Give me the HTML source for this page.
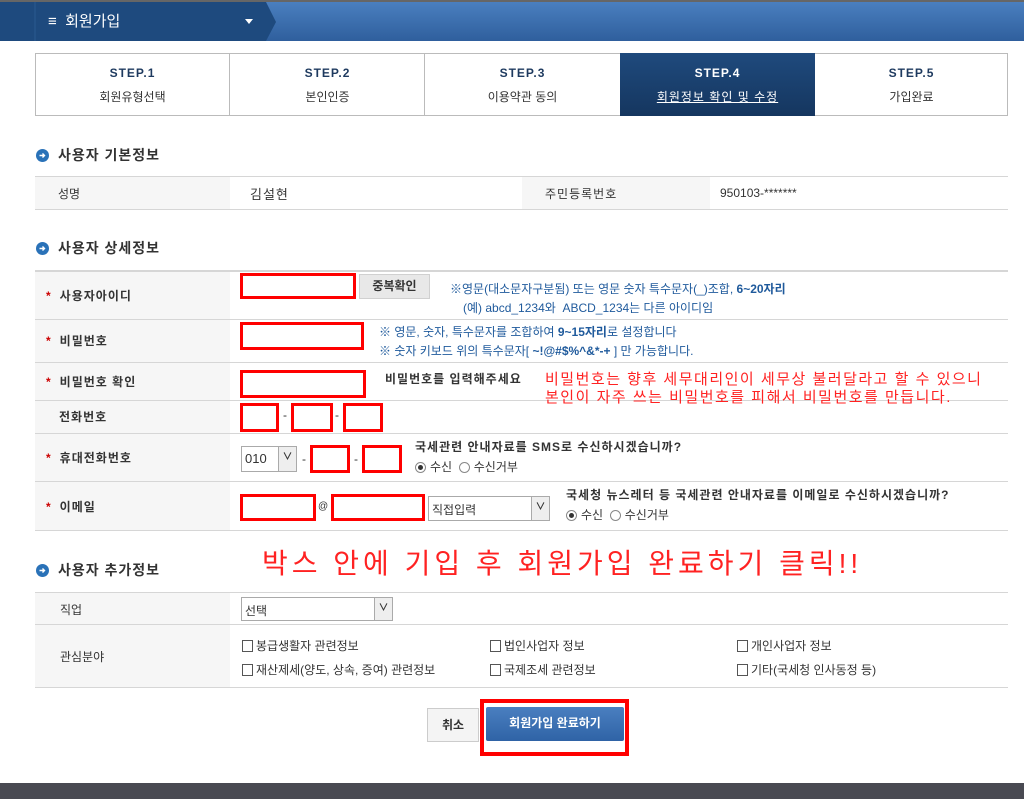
<!DOCTYPE html>
<html><head><meta charset="utf-8"><style>
*{margin:0;padding:0;box-sizing:border-box}
body{width:1024px;height:799px;position:relative;background:#fff;font-family:"Liberation Sans","Noto Sans CJK KR",sans-serif;font-size:12px;color:#333;overflow:hidden}
.a{position:absolute;white-space:nowrap}
.rb{position:absolute;border:3px solid #f00;background:#fff}
.bl{color:#1f5a9c}
.lab{position:absolute;left:35px;width:195px;background:#f6f6f6}
.hl{position:absolute;left:35px;right:16px;height:1px;background:#d6d6d6}
.h{position:absolute;left:36px;font-size:14px;font-weight:bold;color:#333;letter-spacing:1px}
.h svg{vertical-align:-2px;margin-right:9px}
.st{color:#c00;font-weight:bold;margin-right:8px}
.cb{display:inline-block;width:11px;height:12px;border:1px solid #555;vertical-align:-2px;margin-right:3px}
.rd{display:inline-block;width:11px;height:11px;border:1px solid #888;border-radius:50%;vertical-align:-2px;margin-right:4px;position:relative}
.rd.on:after{content:"";position:absolute;left:2px;top:2px;width:5px;height:5px;border-radius:50%;background:#333}
.sel{position:absolute;border:1px solid #aaa;background:#fff;font-size:12px;padding:4px 3px}
.sel b{position:absolute;right:0;top:0;bottom:0;width:18px;border-left:1px solid #aaa;background:#eee;font-size:10px;text-align:center;line-height:22px}
</style></head><body>
<div class="a" style="left:0;top:0;width:1024px;height:41px;background:linear-gradient(#4a7fbf,#2f5f9d);border-top:2px solid #666"></div>
<svg class="a" style="left:0;top:2px" width="280" height="39"><polygon points="0,0 266,0 276,20 266,39 0,39" fill="#1e4a7e"/><line x1="35" y1="0" x2="35" y2="39" stroke="#2b5a90"/><polygon points="245,17 253,17 249,22" fill="#fff"/></svg>
<div class="a" style="left:48px;top:10px;color:#fff;font-size:15px">≡&nbsp; 회원가입</div>
<div class="a" style="left:35px;top:53px;width:973px;height:63px;border:1px solid #bbb"></div>
<div class="a" style="left:229px;top:53px;width:1px;height:63px;background:#bbb"></div>
<div class="a" style="left:424px;top:53px;width:1px;height:63px;background:#bbb"></div>
<div class="a" style="left:620px;top:53px;width:195px;height:63px;background:linear-gradient(#1f4a7d,#15365f)"></div>
<div class="a" style="left:35px;top:66px;width:195px;text-align:center;font-weight:bold;color:#1e3a5f;letter-spacing:1px">STEP.1</div>
<div class="a" style="left:35px;top:88px;width:195px;text-align:center">회원유형선택</div>
<div class="a" style="left:230px;top:66px;width:195px;text-align:center;font-weight:bold;color:#1e3a5f;letter-spacing:1px">STEP.2</div>
<div class="a" style="left:230px;top:88px;width:195px;text-align:center">본인인증</div>
<div class="a" style="left:425px;top:66px;width:195px;text-align:center;font-weight:bold;color:#1e3a5f;letter-spacing:1px">STEP.3</div>
<div class="a" style="left:425px;top:88px;width:195px;text-align:center">이용약관 동의</div>
<div class="a" style="left:620px;top:66px;width:195px;text-align:center;font-weight:bold;color:#fff;letter-spacing:1px">STEP.4</div>
<div class="a" style="left:620px;top:88px;width:195px;text-align:center;color:#fff;text-decoration:underline;letter-spacing:1px">회원정보 확인 및 수정</div>
<div class="a" style="left:815px;top:66px;width:193px;text-align:center;font-weight:bold;color:#1e3a5f;letter-spacing:1px">STEP.5</div>
<div class="a" style="left:815px;top:88px;width:193px;text-align:center">가입완료</div>
<div class="h a" style="top:145px"><svg width="13" height="13"><circle cx="6.5" cy="6.5" r="6.5" fill="#2a72b8"/><path d="M3.5 6.5h5M6.5 4.5l2 2-2 2" stroke="#fff" stroke-width="1.4" fill="none"/></svg>사용자 기본정보</div>
<div class="lab" style="top:177px;height:32px"></div>
<div class="a" style="left:522px;top:177px;width:188px;height:32px;background:#f6f6f6"></div>
<div class="hl" style="top:176px"></div><div class="hl" style="top:209px"></div>
<div class="a" style="left:58px;top:185px">성명</div>
<div class="a" style="left:250px;top:184px;font-size:13px;letter-spacing:1px">김설현</div>
<div class="a" style="left:545px;top:185px;letter-spacing:1px">주민등록번호</div>
<div class="a" style="left:720px;top:186px">950103-*******</div>
<div class="h a" style="top:238px"><svg width="13" height="13"><circle cx="6.5" cy="6.5" r="6.5" fill="#2a72b8"/><path d="M3.5 6.5h5M6.5 4.5l2 2-2 2" stroke="#fff" stroke-width="1.4" fill="none"/></svg>사용자 상세정보</div>
<div class="lab" style="top:270px;height:261px"></div>
<div class="hl" style="top:270px;height:2px"></div>
<div class="hl" style="top:319px"></div><div class="hl" style="top:362px"></div><div class="hl" style="top:400px"></div><div class="hl" style="top:433px"></div><div class="hl" style="top:481px"></div><div class="hl" style="top:530px"></div>
<div class="a" style="left:46px;top:287px;font-weight:bold;letter-spacing:1px"><span class="st">*</span>사용자아이디</div>
<div class="a" style="left:46px;top:332px;font-weight:bold;letter-spacing:1px"><span class="st">*</span>비밀번호</div>
<div class="a" style="left:46px;top:373px;font-weight:bold;letter-spacing:1px"><span class="st">*</span>비밀번호 확인</div>
<div class="a" style="left:59px;top:408px;font-weight:bold;letter-spacing:1px">전화번호</div>
<div class="a" style="left:46px;top:449px;font-weight:bold;letter-spacing:1px"><span class="st">*</span>휴대전화번호</div>
<div class="a" style="left:46px;top:498px;font-weight:bold;letter-spacing:1px"><span class="st">*</span>이메일</div>
<div class="rb" style="left:240px;top:273px;width:116px;height:26px"></div>
<div class="a" style="left:359px;top:274px;width:71px;height:25px;background:#e8e8e8;border:1px solid #d0d0d0;text-align:center;line-height:22px;font-weight:bold">중복확인</div>
<div class="a bl" style="left:450px;top:280px">※영문(대소문자구분됨) 또는 영문 숫자 특수문자(_)조합, <b>6~20자리</b></div>
<div class="a bl" style="left:463px;top:299px">(예) abcd_1234와 &nbsp;ABCD_1234는 다른 아이디임</div>
<div class="rb" style="left:240px;top:322px;width:124px;height:28px"></div>
<div class="a bl" style="left:379px;top:323px">※ 영문, 숫자, 특수문자를 조합하여 <b>9~15자리</b>로 설정합니다</div>
<div class="a bl" style="left:379px;top:342px">※ 숫자 키보드 위의 특수문자[ <b>~!@#$%^&amp;*-+</b> ] 만 가능합니다.</div>
<div class="rb" style="left:240px;top:370px;width:126px;height:28px"></div>
<div class="a" style="left:385px;top:370px;font-weight:bold;letter-spacing:1px">비밀번호를 입력해주세요</div>
<div class="a" style="left:545px;top:371px;color:#f22;font-size:15px;line-height:18px;letter-spacing:1.5px">비밀번호는 향후 세무대리인이 세무상 불러달라고 할 수 있으니<br>본인이 자주 쓰는 비밀번호를 피해서 비밀번호를 만듭니다.</div>
<div class="rb" style="left:240px;top:403px;width:39px;height:29px"></div>
<div class="a" style="left:283px;top:408px">-</div>
<div class="rb" style="left:291px;top:403px;width:42px;height:29px"></div>
<div class="a" style="left:335px;top:408px">-</div>
<div class="rb" style="left:343px;top:403px;width:40px;height:29px"></div>
<div class="sel" style="left:241px;top:446px;width:56px;height:26px;font-size:13px">010<b>∨</b></div>
<div class="a" style="left:302px;top:452px">-</div>
<div class="rb" style="left:310px;top:445px;width:40px;height:28px"></div>
<div class="a" style="left:354px;top:452px">-</div>
<div class="rb" style="left:362px;top:445px;width:40px;height:28px"></div>
<div class="a" style="left:415px;top:438px;font-weight:bold;letter-spacing:1px">국세관련 안내자료를 SMS로 수신하시겠습니까?</div>
<div class="a" style="left:415px;top:458px"><span class="rd on"></span>수신 &nbsp;<span class="rd"></span>수신거부</div>
<div class="rb" style="left:240px;top:494px;width:76px;height:27px"></div>
<div class="a" style="left:318px;top:501px;font-size:10px">@</div>
<div class="rb" style="left:331px;top:494px;width:94px;height:27px"></div>
<div class="sel" style="left:428px;top:496px;width:122px;height:25px">직접입력<b>∨</b></div>
<div class="a" style="left:566px;top:486px;font-weight:bold;letter-spacing:1px">국세청 뉴스레터 등 국세관련 안내자료를 이메일로 수신하시겠습니까?</div>
<div class="a" style="left:566px;top:506px"><span class="rd on"></span>수신 &nbsp;<span class="rd"></span>수신거부</div>
<div class="h a" style="top:560px"><svg width="13" height="13"><circle cx="6.5" cy="6.5" r="6.5" fill="#2a72b8"/><path d="M3.5 6.5h5M6.5 4.5l2 2-2 2" stroke="#fff" stroke-width="1.4" fill="none"/></svg>사용자 추가정보</div>
<div class="a" style="left:262px;top:542px;color:#f22;font-size:28px;letter-spacing:4px">박스 안에 기입 후 회원가입 완료하기 클릭!!</div>
<div class="lab" style="top:593px;height:94px"></div>
<div class="hl" style="top:592px"></div><div class="hl" style="top:624px"></div><div class="hl" style="top:687px"></div>
<div class="a" style="left:60px;top:601px">직업</div>
<div class="a" style="left:60px;top:648px">관심분야</div>
<div class="sel" style="left:241px;top:597px;width:152px;height:24px">선택<b>∨</b></div>
<div class="a" style="left:242px;top:637px"><span class="cb"></span>봉급생활자 관련정보</div>
<div class="a" style="left:242px;top:661px"><span class="cb"></span>재산제세(양도, 상속, 증여) 관련정보</div>
<div class="a" style="left:490px;top:637px"><span class="cb"></span>법인사업자 정보</div>
<div class="a" style="left:490px;top:661px"><span class="cb"></span>국제조세 관련정보</div>
<div class="a" style="left:737px;top:637px"><span class="cb"></span>개인사업자 정보</div>
<div class="a" style="left:737px;top:661px"><span class="cb"></span>기타(국세청 인사동정 등)</div>
<div class="a" style="left:427px;top:708px;width:52px;height:34px;background:#f4f4f4;border:1px solid #ccc;text-align:center;line-height:32px;font-weight:bold">취소</div>
<div class="a" style="left:480px;top:699px;width:149px;height:57px;border:4px solid #f00"></div>
<div class="a" style="left:486px;top:707px;width:138px;height:34px;background:linear-gradient(#4a7fc0,#2f63a6);border-radius:2px;color:#fff;text-align:center;line-height:33px;font-weight:bold">회원가입 완료하기</div>
<div class="a" style="left:0;top:783px;width:1024px;height:16px;background:#494a52"></div>
</body></html>
